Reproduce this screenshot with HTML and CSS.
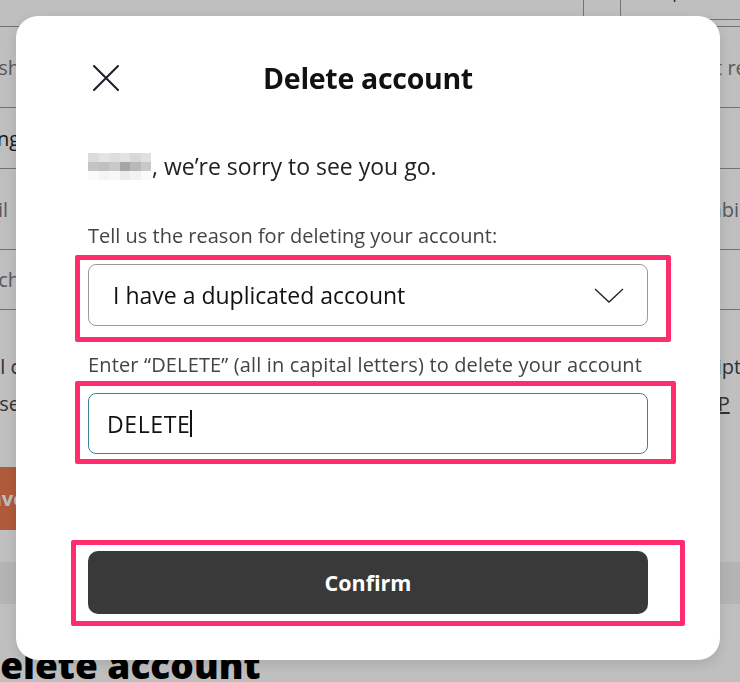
FILE: index.html
```html
<!DOCTYPE html>
<html lang="en">
<head>
    <meta charset="UTF-8">
    <meta name="viewport" content="width=device-width, initial-scale=1.0">
    <title>Delete account</title>
    <link rel="stylesheet" href="styles.css">
</head>
<body>
    <div class="page">
        <div class="topbar">
            <span class="top-cell"></span>
            <span class="top-tag">Not provided</span>
        </div>
        <div class="row row-tall">
            <span class="cell-l">Publish</span>
            <span class="cell-r">Not registered</span>
        </div>
        <div class="row row-short">
            <span class="cell-l cell-dark">Sing</span>
            <span class="cell-r"></span>
        </div>
        <div class="row row-tall">
            <span class="cell-l cell-narrow">Email</span>
            <span class="cell-r cell-r-short">Unbind</span>
        </div>
        <div class="row row-short">
            <span class="cell-l">Switch</span>
            <span class="cell-r"></span>
        </div>
        <div class="note">
            <div class="note-line"><span class="cell-l">all c</span><span class="cell-r">Script</span></div>
            <div class="note-line"><span class="cell-l">close</span><span class="cell-r">nd <u>P</u></span></div>
        </div>
        <div class="save-row"><button class="save">Save</button></div>
        <div class="band"></div>
        <h1 class="page-title">Delete account</h1>
    </div>

    <div class="overlay">
        <div class="dialog">
            <div class="dialog-head">
                <button class="close" aria-label="Close">
                    <svg width="26" height="26" viewBox="0 0 26 26">
                        <path d="M1 1 L25 25 M25 1 L1 25" stroke="#1b1d2b" stroke-width="2" fill="none" stroke-linecap="round"/>
                    </svg>
                </button>
                <h2 class="dialog-title">Delete account</h2>
                <span></span>
            </div>

            <p class="greeting">
                <span class="blur-name">
                    <i style="background:#dcdcdc"></i><i style="background:#e4e4e4"></i><i style="background:#dedede"></i><i style="background:#e2e2e2"></i><i style="background:#d8d8d8"></i><i style="background:#e0e0e0"></i>
                    <i style="background:#c4c4c4"></i><i style="background:#c0c0c0"></i><i style="background:#c8c8c8"></i><i style="background:#a6a6a6"></i><i style="background:#b8b8b8"></i><i style="background:#c9c9c9"></i>
                    <i style="background:#fbfbfb"></i><i style="background:#f4f4f4"></i><i style="background:#f8f8f8"></i><i style="background:#ececec"></i><i style="background:#f2f2f2"></i><i style="background:#fafafa"></i>
                </span>, we’re sorry to see you go.
            </p>

            <label class="field-label">Tell us the reason for deleting your account:</label>
            <div class="mark">
                <div class="select">
                    <span>I have a duplicated account</span>
                    <svg width="30" height="15" viewBox="0 0 30 15">
                        <path d="M1 1 L15 14 L29 1" stroke="#222" stroke-width="1.3" fill="none"/>
                    </svg>
                </div>
                <span class="highlight hl-select"></span>
            </div>

            <label class="field-label label-confirm">Enter “DELETE” (all in capital letters) to delete your account</label>
            <div class="mark">
                <div class="text-input">DELETE<span class="caret"></span></div>
                <span class="highlight hl-input"></span>
            </div>

            <div class="mark mark-confirm">
                <button class="confirm">Confirm</button>
                <span class="highlight hl-confirm"></span>
            </div>
        </div>
    </div>
</body>
</html>
```

FILE: styles.css
```css
* {
    box-sizing: border-box;
}

body {
    margin: 0;
    font-family: 'Open Sans', 'Noto Sans', sans-serif;
    background-color: #fff;
    color: #222;
    overflow: hidden;
}

/* page behind the modal */
.page {
    width: 740px;
    height: 682px;
}
.topbar {
    height: 26px;
    display: flex;
    justify-content: flex-end;
}
.top-cell {
    width: 37px;
    height: 20px;
    border-left: 1px solid #999;
}
.top-tag {
    width: 120px;
    height: 36px;
    margin-top: -16px;
    border-left: 1px solid #999;
    border-bottom: 1px solid #999;
    border-bottom-left-radius: 6px;
    padding-left: 20px;
    font-size: 16px;
    line-height: 16px;
    color: #222;
    overflow: hidden;
    white-space: nowrap;
}
.row {
    display: flex;
    justify-content: space-between;
    align-items: center;
    border-top: 1px solid #999;
    font-size: 20px;
    color: #777;
}
.row-tall {
    height: 81px;
}
.row-short {
    height: 61px;
}
.row:nth-child(5) {
    border-bottom: 1px solid #999;
}
.cell-l {
    width: 20px;
    overflow: hidden;
    white-space: nowrap;
    direction: rtl;
}
.cell-narrow {
    width: 8px;
    margin-right: 12px;
}
.cell-r {
    width: 35px;
    overflow: hidden;
    white-space: nowrap;
    text-indent: -17px;
}
.cell-r-short {
    text-indent: -10px;
}
.cell-dark {
    color: #222;
}
.note {
    padding-top: 38px;
    font-size: 20px;
    color: #444;
}
.note-line {
    display: flex;
    justify-content: space-between;
    line-height: 37px;
}
.save-row {
    padding-top: 45px;
}
.save {
    width: 150px;
    height: 63px;
    margin-left: -110px;
    border: none;
    border-radius: 6px;
    background-color: #eb7850;
    color: #fff;
    font-family: inherit;
    font-size: 20px;
    font-weight: 700;
    text-align: right;
    padding-right: 15px;
}
.band {
    height: 42px;
    margin-top: 32px;
    background-color: #f1f1f1;
}
.page-title {
    margin: 42px 0 0 -27px;
    font-size: 37px;
    font-weight: 800;
    color: #000;
    line-height: 1;
}

/* modal */
.overlay {
    position: fixed;
    inset: 0;
    background-color: rgba(0, 0, 0, 0.25);
}
.dialog {
    position: absolute;
    top: 16px;
    left: 16px;
    width: 704px;
    height: 644px;
    background-color: #fff;
    border-radius: 22px;
    padding: 47px 72px 0;
    box-shadow: 0 4px 14px rgba(0, 0, 0, 0.12);
}
.dialog-head {
    display: grid;
    grid-template-columns: 40px 1fr 40px;
    align-items: center;
    height: 30px;
}
.close {
    justify-self: start;
    border: none;
    background: none;
    padding: 0;
    margin-left: 5px;
    width: 26px;
    height: 26px;
    cursor: pointer;
}
.dialog-title {
    margin: 0;
    text-align: center;
    font-size: 28.5px;
    line-height: 30px;
    font-weight: 700;
    color: #111;
    letter-spacing: -0.3px;
}
.greeting {
    margin: 59px 0 0;
    font-size: 23px;
    line-height: 28px;
    color: #222;
    display: flex;
    align-items: center;
}
.blur-name {
    display: inline-grid;
    grid-template-columns: repeat(6, 10.5px);
    grid-template-rows: repeat(3, 9px);
    margin-right: 1px;
}
.field-label {
    display: block;
    margin-top: 44px;
    font-size: 20px;
    line-height: 24px;
    color: #444;
}
.label-confirm {
    margin-top: 27px;
    letter-spacing: 0.15px;
}
.mark {
    position: relative;
    margin-top: 16px;
}
.select {
    height: 62px;
    border: 1px solid #9a9a9a;
    border-radius: 8px;
    display: flex;
    align-items: center;
    justify-content: space-between;
    padding: 0 23px 0 24px;
    font-size: 23px;
    color: #111;
}
.text-input {
    height: 61px;
    border: 1px solid #3f7f99;
    border-radius: 8px;
    display: flex;
    align-items: center;
    padding-left: 18px;
    font-size: 23px;
    letter-spacing: 0.6px;
    color: #111;
}
.caret {
    width: 1.5px;
    height: 27px;
    background-color: #111;
}
.mark-confirm {
    margin-top: 97px;
}
.confirm {
    width: 100%;
    height: 63px;
    border: none;
    border-radius: 10px;
    background-color: #393939;
    color: #fff;
    font-family: inherit;
    font-size: 21.5px;
    font-weight: 700;
    cursor: pointer;
}

/* annotation frames drawn over the controls */
.highlight {
    position: absolute;
    border: 5px solid #ff2d6d;
    border-radius: 2px;
    pointer-events: none;
}
.hl-select {
    top: -9px;
    left: -13px;
    right: -23px;
    bottom: -16px;
}
.hl-input {
    top: -12px;
    left: -13px;
    right: -28px;
    bottom: -10px;
}
.hl-confirm {
    top: -11px;
    left: -17px;
    right: -37px;
    bottom: -12px;
}
```
